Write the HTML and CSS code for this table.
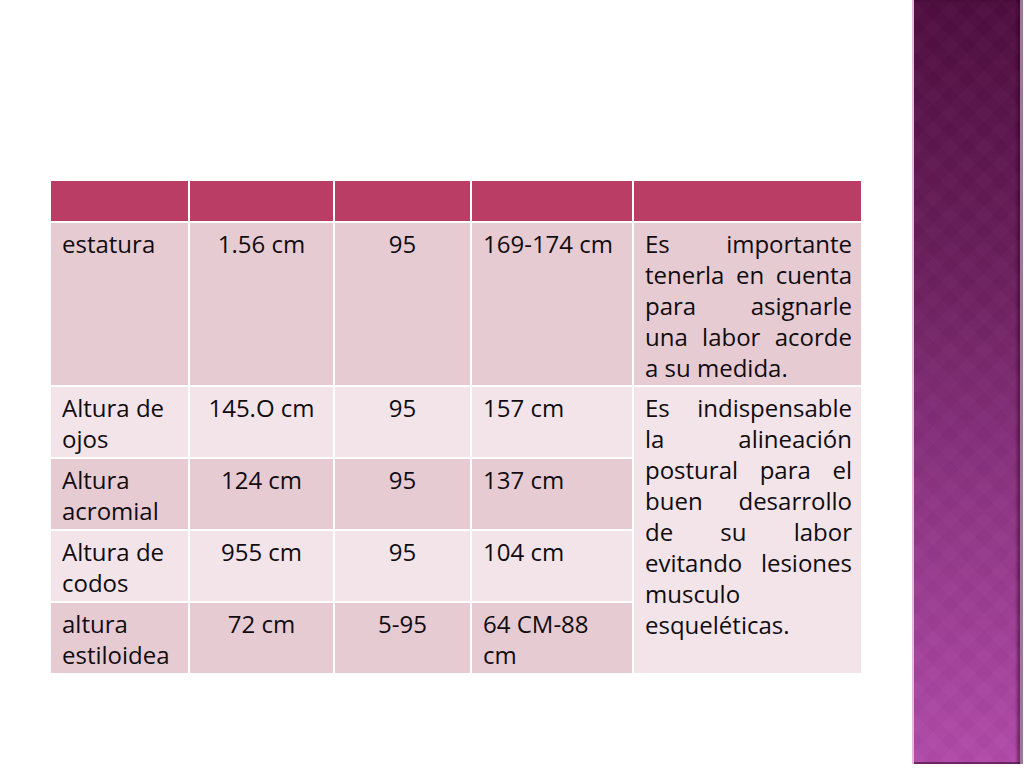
FILE: index.html
```html
<!DOCTYPE html>
<html lang="es">
<head>
<meta charset="utf-8">
<title>Medidas antropométricas</title>
<link rel="stylesheet" href="styles.css">
</head>
<body>
<div class="slide">
  <main class="content">
    <table class="data">
      <colgroup>
        <col class="c1"><col class="c2"><col class="c3"><col class="c4"><col class="c5">
      </colgroup>
      <tr class="head"><td></td><td></td><td></td><td></td><td></td></tr>
      <tr class="dark">
        <td>estatura</td>
        <td class="center">1.56 cm</td>
        <td class="center">95</td>
        <td>169-174 cm</td>
        <td class="just">Es importante tenerla en cuenta para asignarle una labor acorde a su medida.</td>
      </tr>
      <tr class="light pair">
        <td>Altura de ojos</td>
        <td class="center">145.O cm</td>
        <td class="center">95</td>
        <td>157 cm</td>
        <td class="just merged" rowspan="4">Es indispensable la alineación postural para el buen desarrollo de su labor evitando lesiones musculo esqueléticas.</td>
      </tr>
      <tr class="dark pair">
        <td>Altura acromial</td>
        <td class="center">124 cm</td>
        <td class="center">95</td>
        <td>137 cm</td>
      </tr>
      <tr class="light pair">
        <td>Altura de codos</td>
        <td class="center">955 cm</td>
        <td class="center">95</td>
        <td>104 cm</td>
      </tr>
      <tr class="dark pair">
        <td>altura estiloidea</td>
        <td class="center">72 cm</td>
        <td class="center">5-95</td>
        <td>64 CM-88 cm</td>
      </tr>
    </table>
  </main>
  <aside class="sidebar"></aside>
</div>
</body>
</html>
```

FILE: styles.css
```css
html, body {
  margin: 0;
  padding: 0;
  background: #ffffff;
}

.slide {
  display: flex;
  width: 1024px;
  height: 768px;
  overflow: hidden;
}

.content {
  flex: 1;
  padding: 179px 0 0 49px;
}

.data {
  border-collapse: separate;
  border-spacing: 2px;
  table-layout: fixed;
  width: 814px;
  font-family: "Open Sans", "DejaVu Sans", sans-serif;
  font-size: 24px;
  line-height: 31px;
  color: #100c10;
}

.c1 { width: 137px; }
.c2 { width: 143px; }
.c3 { width: 135px; }
.c4 { width: 160px; }
.c5 { width: 227px; }

.data td {
  padding: 5px 10px 2px 11px;
  vertical-align: top;
}

.pair td {
  height: 63px;
}

.head td {
  height: 40px;
  padding: 0;
  background: #b93d64;
}

.dark td {
  background: #e7cbd3;
}

.light td {
  background: #f2e4e8;
}

.data td.center {
  text-align: center;
  padding-left: 10px;
  padding-right: 10px;
}

.data td.just {
  text-align: justify;
  padding-right: 9px;
}

.data td.merged {
  background: #f2e4e8;
  height: auto;
}

.sidebar {
  width: 106px;
  height: 764px;
  margin-right: 4px;
  border-left: 2px solid #e6b6dc;
  box-shadow: inset -3px 0 3px rgba(40, 0, 30, 0.45), 3px 0 0 #9a7a98, inset 0 -2px 0 rgba(60, 10, 50, 0.5);
  background:
    repeating-linear-gradient(45deg, rgba(255, 255, 255, 0.012) 0 12px, rgba(0, 0, 0, 0.01) 12px 24px),
    repeating-linear-gradient(-45deg, rgba(255, 255, 255, 0.012) 0 12px, rgba(0, 0, 0, 0.01) 12px 24px),
    linear-gradient(180deg, #4e0d3f 0%, #6a1f5c 35%, #8e3584 65%, #b14ba9 100%);
}
```
